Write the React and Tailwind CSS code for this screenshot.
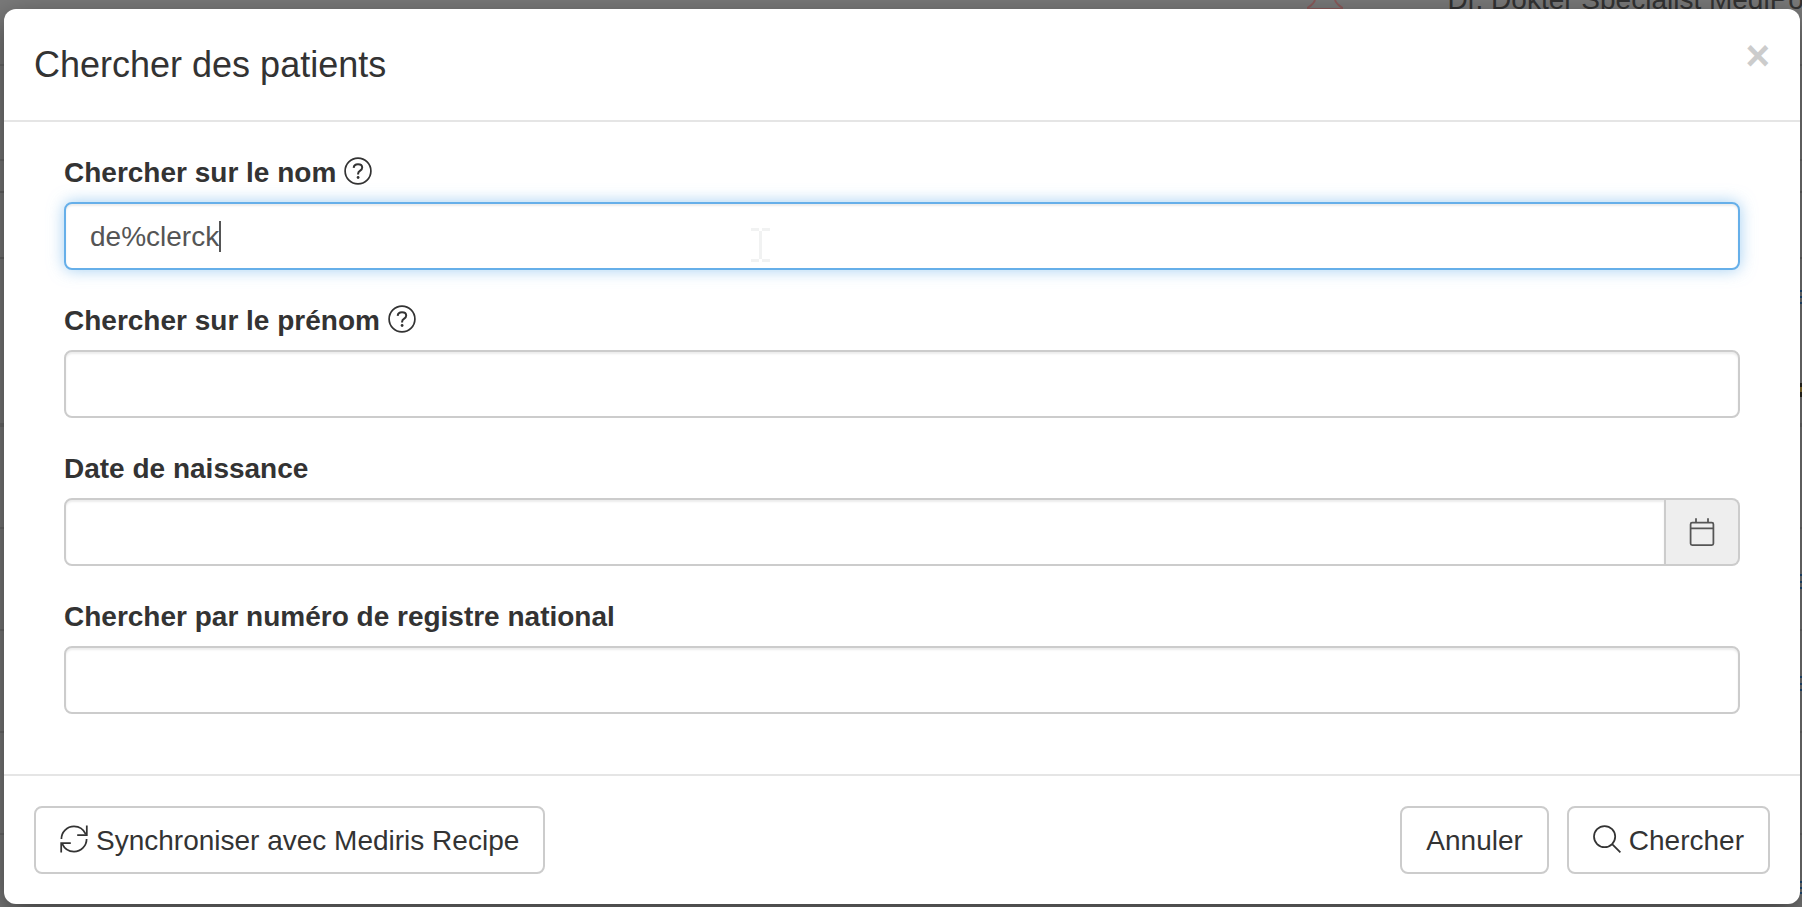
import { useEffect, useRef } from "react";

const controlClass =
  "h-17 w-full min-w-0 rounded-lg border-2 border-[#ccc] bg-white px-6 pt-0.5 text-[28px] leading-10 text-[#555] outline-none shadow-[inset_0_2px_2px_rgba(0,0,0,0.075)] focus:border-[#66afe9] focus:shadow-[inset_0_2px_2px_rgba(0,0,0,0.075),0_0_16px_rgba(102,175,233,0.6)]";
const buttonClass =
  "flex h-17 items-center gap-2 rounded-lg border-2 border-[#ccc] bg-white px-6 pt-0.5 text-[28px] leading-10 text-[#333]";

function HelpIcon() {
  return (
    <svg className="mt-[5px] size-7" viewBox="0 0 28 28" fill="none" stroke="currentColor" aria-hidden="true">
      <circle cx="14" cy="14" r="12.9" strokeWidth="1.7" />
      <path d="M9.700 10.900C9.800 8.400 11.600 7.200 14 7.200c2.400 0 4.200 1.300 4.200 3.400 0 1.500-.8 2.300-2 3.100-1.300.9-2.100 1.500-2.100 3v.8" strokeWidth="2" />
      <circle cx="14.100" cy="20.500" r="1.400" fill="currentColor" stroke="none" />
    </svg>
  );
}

function CalendarIcon() {
  return (
    <svg className="size-7" viewBox="0 0 28 28" fill="none" stroke="currentColor" strokeWidth="1.750" aria-hidden="true">
      <rect x="2.600" y="4.600" width="22.800" height="22.500" rx="1.600" />
      <path d="M2.600 10.400h22.800M8 .2v4.400M20 .2v4.400" />
    </svg>
  );
}

function SyncIcon() {
  return (
    <svg className="mb-1 size-7" viewBox="0 0 28 28" fill="none" stroke="currentColor" strokeWidth="1.750" aria-hidden="true">
      <path d="M1.400 14C1.400 7 7 1.400 14 1.400c5.200 0 9.600 3 11.900 8" />
      <path d="M26.600 14c0 7-5.600 12.600-12.600 12.600-5.200 0-9.600-3-11.900-8" />
      <path d="M26.800 .4v9.600h-9.600M1.200 27.600v-9.600h9.600" />
    </svg>
  );
}

function SearchIcon() {
  return (
    <svg className="mb-1 size-7" viewBox="0 0 28 28" fill="none" stroke="currentColor" strokeWidth="1.750" aria-hidden="true">
      <circle cx="11.600" cy="11.600" r="10.600" />
      <path d="M19.100 19.100l8.300 8.300" />
    </svg>
  );
}

function Field({ id, label, help, children }) {
  return (
    <div className="mb-[30px]">
      <label htmlFor={id} className="mb-2 flex items-start gap-2 text-[28px] leading-[42px] font-bold">
        {label}
        {help && <HelpIcon />}
      </label>
      {children}
    </div>
  );
}

function Backdrop() {
  return (
    <div className="absolute inset-0 overflow-hidden" aria-hidden="true">
      <div className="flex h-2.5 items-end justify-end">
        <svg className="mr-[104px] h-2.5 w-10 shrink-0" viewBox="0 0 40 10" fill="none" stroke="#8a5a5a" strokeWidth="2">
          <path d="M11 0C10 3 8 5 4 7.500V9h34V7.500C34 5 32 3 31 0" />
        </svg>
        <span className="-mr-[19px] -mb-1 text-[28px] leading-7 whitespace-nowrap text-[#333]">Dr. Dokter Specialist MediPort</span>
      </div>
      <div className="h-14 border-b-2 border-[#6c6c6c]" />
      <div className="h-[95px] border-b-2 border-[#6c6c6c]" />
      <div className="h-8 border-b-2 border-[#666]" />
      <div className="h-[66px] border-b-2 border-[#666]" />
      <div className="h-[168px] border-b-4 border-[#6c6c6c]" />
      <div className="h-[102px] border-b-2 border-[#6c6c6c]" />
      <div className="h-[102px] border-b-2 border-[#6c6c6c]" />
      <div className="h-[102px] border-b-2 border-[#6c6c6c]" />
      <div className="h-[102px] border-b-2 border-[#6c6c6c]" />
      <svg className="absolute top-0 right-0 h-[907px] w-0.5" viewBox="0 0 2 907" stroke="#23507c" strokeWidth="2">
        <path d="M0 291h2M0 297h2M0 303h2M0 575h2M0 582h2M0 588h2M0 677h2M0 684h2M0 690h2M0 882h2M0 888h2M0 893h2" />
        <path d="M1 383v14" stroke="#2b2a20" />
        <path d="M1 387v5" stroke="#8d7433" />
      </svg>
    </div>
  );
}

export default function App() {
  const nameRef = useRef(null);

  useEffect(() => {
    const input = nameRef.current;
    input.focus();
    input.setSelectionRange(input.value.length, input.value.length);
  }, []);

  return (
    <div className="relative min-h-screen overflow-hidden bg-[#7a7a7a] pt-[9px] pr-0.5 pb-[3px] pl-1 font-['Liberation_Sans',Arial,sans-serif] text-[#333]">
      <Backdrop />
      <div
        role="dialog"
        aria-labelledby="dialog-title"
        className="relative rounded-xl bg-white shadow-[0_10px_30px_rgba(0,0,0,0.5)]"
      >
        <header className="flex items-start justify-between border-b-2 border-[#e5e5e5] p-[30px]">
          <h1 id="dialog-title" className="text-[36px] leading-[51px]">Chercher des patients</h1>
          <button type="button" aria-label="Fermer" className="-mt-1 text-[42px] leading-[42px] font-bold text-[#ccc]">×</button>
        </header>
        <form id="search" className="px-15 py-[30px]">
          <Field id="name" label="Chercher sur le nom" help>
            <div className="relative">
              <input ref={nameRef} id="name" type="text" defaultValue="de%clerck" autoComplete="off" spellCheck={false} className={controlClass + " caret-transparent"} />
              <span className="pointer-events-none absolute top-[19px] left-[155px] h-[31px] w-0.5 bg-[#555]" />
              <svg className="pointer-events-none absolute top-6 left-[687px] h-9 w-5" viewBox="0 0 20 36" fill="none" stroke="#f1f2f2" strokeWidth="3" aria-hidden="true">
                <path d="M0 3.500h8M11 3.500h8M0 34.500h8M11 34.500h8M9.500 5v28" />
              </svg>
            </div>
          </Field>
          <Field id="firstname" label="Chercher sur le prénom" help>
            <input id="firstname" type="text" className={controlClass} />
          </Field>
          <Field id="birthdate" label="Date de naissance">
            <div className="flex">
              <input id="birthdate" type="text" className={controlClass + " rounded-r-none"} />
              <button type="button" aria-label="Choisir une date" className="flex h-17 w-[74px] shrink-0 items-center justify-center rounded-r-lg border-2 border-l-0 border-[#ccc] bg-[#eee] text-[#555]">
                <CalendarIcon />
              </button>
            </div>
          </Field>
          <Field id="registry" label="Chercher par numéro de registre national">
            <input id="registry" type="text" className={controlClass} />
          </Field>
        </form>
        <footer className="flex items-center justify-between border-t-2 border-[#e5e5e5] p-[30px]">
          <button type="button" className={buttonClass}>
            <SyncIcon />
            Synchroniser avec Mediris Recipe
          </button>
          <div className="flex gap-[18px]">
            <button type="button" className={buttonClass}>Annuler</button>
            <button type="submit" form="search" className={buttonClass}>
              <SearchIcon />
              Chercher
            </button>
          </div>
        </footer>
      </div>
    </div>
  );
}
